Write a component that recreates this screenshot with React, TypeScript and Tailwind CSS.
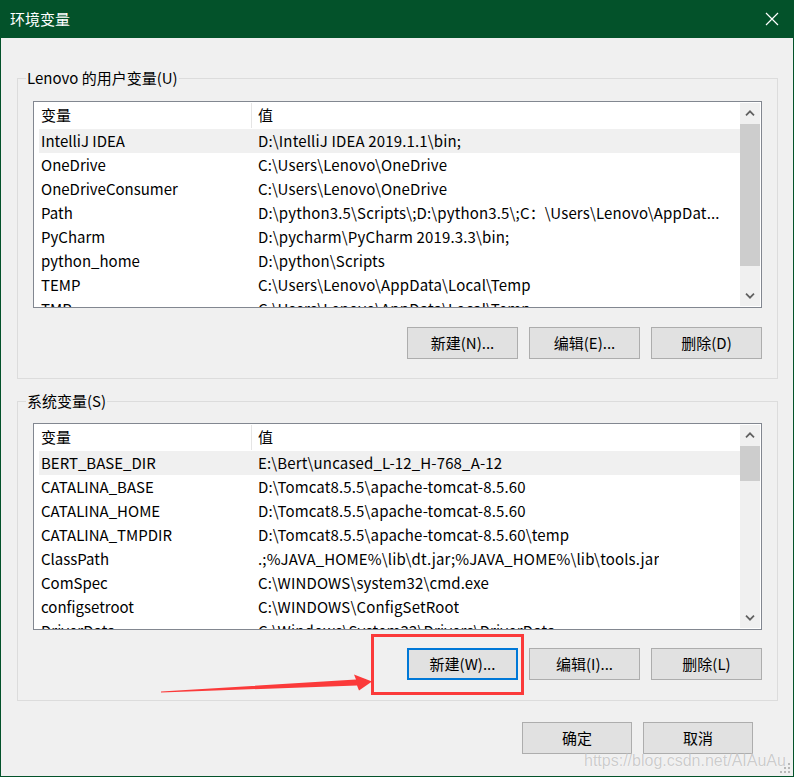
import React from "react";

const userRows: [string, string][] = [
  ["IntelliJ IDEA", "D:\\IntelliJ IDEA 2019.1.1\\bin;"],
  ["OneDrive", "C:\\Users\\Lenovo\\OneDrive"],
  ["OneDriveConsumer", "C:\\Users\\Lenovo\\OneDrive"],
  ["Path", "D:\\python3.5\\Scripts\\;D:\\python3.5\\;C：\\Users\\Lenovo\\AppDat..."],
  ["PyCharm", "D:\\pycharm\\PyCharm 2019.3.3\\bin;"],
  ["python_home", "D:\\python\\Scripts"],
  ["TEMP", "C:\\Users\\Lenovo\\AppData\\Local\\Temp"],
  ["TMP", "C:\\Users\\Lenovo\\AppData\\Local\\Temp"],
];

const sysRows: [string, string][] = [
  ["BERT_BASE_DIR", "E:\\Bert\\uncased_L-12_H-768_A-12"],
  ["CATALINA_BASE", "D:\\Tomcat8.5.5\\apache-tomcat-8.5.60"],
  ["CATALINA_HOME", "D:\\Tomcat8.5.5\\apache-tomcat-8.5.60"],
  ["CATALINA_TMPDIR", "D:\\Tomcat8.5.5\\apache-tomcat-8.5.60\\temp"],
  ["ClassPath", ".;%JAVA_HOME%\\lib\\dt.jar;%JAVA_HOME%\\lib\\tools.jar"],
  ["ComSpec", "C:\\WINDOWS\\system32\\cmd.exe"],
  ["configsetroot", "C:\\WINDOWS\\ConfigSetRoot"],
  ["DriverData", "C:\\Windows\\System32\\Drivers\\DriverData"],
];

function Chevron({ up }: { up?: boolean }) {
  return (
    <svg width="10" height="6" viewBox="0 0 10 6">
      <path
        d={up ? "M1 5.3 L5 1.3 L9 5.3" : "M1 0.7 L5 4.7 L9 0.7"}
        fill="none"
        stroke="#606060"
        strokeWidth="1.7"
      />
    </svg>
  );
}

function ScrollBar({ thumbClass }: { thumbClass: string }) {
  return (
    <div className="w-[20px] my-[1px] mr-[1px] bg-[#f0f0f0] flex flex-col shrink-0">
      <div className="h-[20px] flex items-center justify-center shrink-0">
        <Chevron up />
      </div>
      <div className="flex-1 flex flex-col">
        <div className={"bg-[#cdcdcd] " + thumbClass} />
      </div>
      <div className="h-[20px] flex items-center justify-center shrink-0">
        <Chevron />
      </div>
    </div>
  );
}

function VarList({ rows, thumbClass }: { rows: [string, string][]; thumbClass: string }) {
  return (
    <div className="h-[207px] border border-[#828790] bg-white flex overflow-hidden">
      <div className="flex-1 min-w-0 overflow-hidden">
        <div className="h-[27px] flex items-stretch">
          <div className="w-[218px] pl-[7px] my-[1px] flex items-center border-r border-[#e5e5e5] shrink-0">
            变量
          </div>
          <div className="pl-[6px] flex items-center">值</div>
        </div>
        {rows.map((r, i) => (
          <div
            key={r[0]}
            className={
              "h-[24px] ml-[5px] flex items-center whitespace-nowrap " +
              (i === 0 ? "bg-[#f0f0f0]" : "")
            }
          >
            <div className="w-[219px] pl-[2px] shrink-0">{r[0]}</div>
            <div className="overflow-hidden tracking-[0.15px]">{r[1]}</div>
          </div>
        ))}
      </div>
      <ScrollBar thumbClass={thumbClass} />
    </div>
  );
}

function Btn({
  children,
  focus,
  narrow,
}: {
  children: React.ReactNode;
  focus?: boolean;
  narrow?: boolean;
}) {
  return (
    <div
      className={
        "h-[32px] bg-[#e1e1e1] flex items-center justify-center text-black " +
        (narrow ? "w-[110px] " : "w-[111px] ") +
        (focus ? "border-2 border-[#0078d7]" : "border border-[#adadad]")
      }
    >
      {children}
    </div>
  );
}

function Group({
  label,
  children,
  className,
}: {
  label: string;
  children: React.ReactNode;
  className: string;
}) {
  return (
    <div className={"relative border border-[#dcdcdc] px-[15px] " + className}>
      <div className="absolute left-[8px] top-[-11px] px-[1px] bg-[#f0f0f0] leading-[20px]">
        {label}
      </div>
      {children}
    </div>
  );
}

export default function App() {
  return (
    <div className="w-[794px] h-[777px] relative overflow-hidden font-['Noto_Sans_CJK_SC',sans-serif] text-[15px] text-black bg-[#f0f0f0] flex flex-col">
      {/* title bar */}
      <div className="h-[38px] bg-[#03522a] flex items-center justify-between pl-[10px] pr-[15px] shrink-0">
        <span className="text-white leading-[20px]">环境变量</span>
        <svg width="14" height="14" viewBox="0 0 14 14">
          <path d="M1 1 L13 13 M13 1 L1 13" stroke="#ffffff" strokeWidth="1.2" />
        </svg>
      </div>
      {/* body */}
      <div className="flex-1 flex flex-col border-x border-b border-[#03522a] pl-[16px] pr-[15px]">
        <Group label="Lenovo 的用户变量(U)" className="mt-[40px] pt-[22px] pb-[19px]">
          <VarList rows={userRows} thumbClass="mt-[1px] h-[142px]" />
          <div className="mt-[19px] flex justify-end gap-[11px]">
            <Btn>新建(N)...</Btn>
            <Btn>编辑(E)...</Btn>
            <Btn>删除(D)</Btn>
          </div>
        </Group>
        <Group label="系统变量(S)" className="mt-[22px] pt-[21px] pb-[20px]">
          <VarList rows={sysRows} thumbClass="mt-[1px] h-[35px]" />
          <div className="mt-[18px] flex justify-end gap-[11px]">
            <Btn focus>新建(W)...</Btn>
            <Btn>编辑(I)...</Btn>
            <Btn>删除(L)</Btn>
          </div>
        </Group>
        <div className="mt-[21px] flex justify-end gap-[11px] pr-[25px]">
          <Btn narrow>确定</Btn>
          <Btn narrow>取消</Btn>
        </div>
      </div>

      {/* red highlight box */}
      <div className="absolute left-[371px] top-[634px] w-[153px] h-[61px] border-[3px] border-[#fb3a3a] pointer-events-none" />
      {/* red arrow */}
      <svg
        className="absolute left-[150px] top-[665px] pointer-events-none"
        width="240"
        height="40"
        viewBox="0 0 240 40"
      >
        <polygon
          points="11,26.5 206,14.5 204,9.5 222,16.5 209,25.5 207,20.5 11,27.5"
          fill="#fb3a3a"
        />
      </svg>
      {/* watermark */}
      <div className="absolute left-[584px] top-[751px] font-['Liberation_Sans',sans-serif] text-[16px] leading-[20px] text-[#cccccc] [text-shadow:0_0_1px_#ffffff,0_0_1px_#ffffff] pointer-events-none">
        https://blog.csdn.net/AIAuAu
      </div>
      {/* resize grip */}
      <svg className="absolute right-[3px] bottom-[3px]" width="12" height="12" viewBox="0 0 12 12">
        <rect x="9" y="1" width="2" height="2" fill="#b8b8b8" />
        <rect x="5" y="5" width="2" height="2" fill="#b8b8b8" />
        <rect x="9" y="5" width="2" height="2" fill="#b8b8b8" />
        <rect x="1" y="9" width="2" height="2" fill="#b8b8b8" />
        <rect x="5" y="9" width="2" height="2" fill="#b8b8b8" />
        <rect x="9" y="9" width="2" height="2" fill="#b8b8b8" />
      </svg>
    </div>
  );
}
